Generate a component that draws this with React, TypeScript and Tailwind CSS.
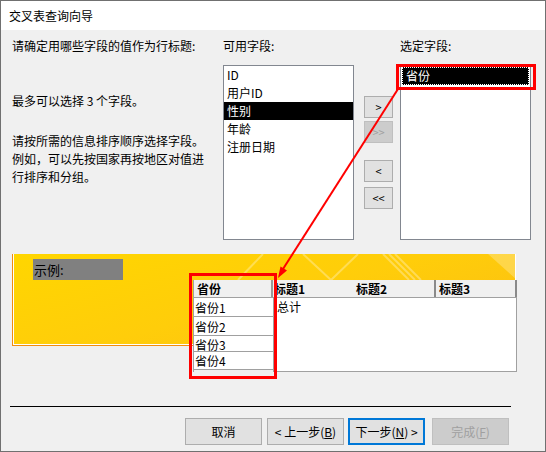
import React from "react";

const available = ["ID", "用户ID", "性别", "年龄", "注册日期"];

const Btn = ({ label, disabled }: { label: string; disabled?: boolean }) => (
  <button
    className={
      "w-[29px] h-[22px] border text-[11px] leading-none flex items-center justify-center " +
      (disabled
        ? "bg-[#cccccc] border-[#bfbfbf] text-[#a0a0a0]"
        : "bg-[#e1e1e1] border-[#adadad] text-black")
    }
  >
    {label}
  </button>
);

const FooterBtn = ({
  children,
  variant,
  className,
}: {
  children: React.ReactNode;
  variant?: "focus" | "disabled";
  className?: string;
}) => (
  <button
    className={
      "h-[27px] w-[77px] flex items-center justify-center text-[12px] whitespace-pre " +
      (variant === "focus"
        ? "border-2 border-[#0078d7] bg-[#e1e1e1] text-black "
        : variant === "disabled"
        ? "border border-[#bfbfbf] bg-[#cccccc] text-[#a0a0a0] "
        : "border border-[#adadad] bg-[#e1e1e1] text-black ") +
      (className || "")
    }
  >
    {children}
  </button>
);

export default function App() {
  return (
    <div className="relative w-[546px] h-[452px] bg-[#f0f0f0] border border-[#707070] flex flex-col overflow-hidden text-[12px] text-black font-['Microsoft_YaHei','Noto_Sans_CJK_SC',sans-serif]">
      {/* Title bar */}
      <div className="h-[29px] bg-white flex items-center pl-[8px] leading-none">
        交叉表查询向导
      </div>

      {/* Field picking */}
      <div className="flex pl-[11px] pt-[8px] h-[210px]">
        <div className="w-[211px]">
          <p className="leading-[16px]">请确定用哪些字段的值作为行标题:</p>
          <p className="leading-[16px] mt-[39px]">最多可以选择 3 个字段。</p>
          <p className="leading-[18px] mt-[23px] whitespace-nowrap">
            请按所需的信息排序顺序选择字段。
            <br />
            例如，可以先按国家再按地区对值进
            <br />
            行排序和分组。
          </p>
        </div>

        <div className="w-[131px]">
          <p className="leading-[16px]">可用字段:</p>
          <div className="mt-[11px] h-[175px] border border-[#828790] bg-white">
            {available.map((f) => (
              <div
                key={f}
                className={
                  "h-[18px] leading-[18px] pl-[3px] " +
                  (f === "性别" ? "bg-black text-white" : "")
                }
              >
                {f}
              </div>
            ))}
          </div>
        </div>

        <div className="w-[46px] pl-[10px] flex flex-col">
          <div className="mt-[58px]">
            <Btn label=">" />
          </div>
          <div className="mt-[3px]">
            <Btn label=">>" disabled />
          </div>
          <div className="mt-[17px]">
            <Btn label="<" />
          </div>
          <div className="mt-[5px]">
            <Btn label="<<" />
          </div>
        </div>

        <div className="w-[131px]">
          <p className="leading-[16px]">选定字段:</p>
          <div className="mt-[11px] h-[175px] border border-[#828790] bg-white p-px">
            <div className="h-[18px] leading-[16px] pl-[3px] bg-black text-white border border-dotted border-white">
              省份
            </div>
          </div>
        </div>
      </div>

      {/* Sample preview */}
      <div className="pl-[11px] mt-[14px]">
        <div className="relative w-[504px] h-[92px]">
          <div className="relative w-full h-full overflow-hidden border-l border-b border-r border-l-[#f28c0f] border-b-[#f28c0f] border-r-white shadow-[inset_1px_-1px_0_#ffffff] bg-[linear-gradient(165deg,#ffd600_0%,#ffcd0a_50%,#fbbd14_100%)]">
            <svg className="absolute inset-0" width="504" height="92">
              <g stroke="#ffffff" strokeWidth="2" opacity="0.3">
                <line x1="290" y1="0" x2="318" y2="26" />
                <line x1="318" y1="26" x2="345" y2="0" />
                <line x1="225" y1="26" x2="250" y2="0" />
                <line x1="370" y1="0" x2="396" y2="26" />
                <line x1="376" y1="0" x2="402" y2="26" />
                <line x1="382" y1="0" x2="408" y2="26" />
              </g>
              <polygon points="475,0 504,0 504,26" fill="#ffffff" opacity="0.25" />
            </svg>
            <div className="absolute left-[20px] top-[5px] w-[90px] h-[21px] bg-[#808080] text-[13px] leading-[21px] pl-px">
              示例:
            </div>
          </div>

          {/* Sample table */}
          <div className="absolute left-[181px] top-[26px] w-[324px]">
            <div className="flex h-[18px] bg-[#f0f0f0] border-b border-[#a0a0a0] font-bold leading-[18px]">
              <div className="w-[80px] pl-[3px] border-l border-[#a0a0a0] border-r-2 border-r-[#9a9a9a]">省份</div>
              <div className="w-[82px] pl-[1px]">标题1</div>
              <div className="w-[81px] pl-[1px] border-r-2 border-r-[#8a8a8a]">标题2</div>
              <div className="w-[81px] pl-[3px] border-r-2 border-r-[#8a8a8a]">标题3</div>
            </div>
            <div className="flex">
              <div className="w-[80px] border-l border-[#a0a0a0]">
                <div className="h-[19px] leading-[19px] bg-white border-b border-[#a0a0a0] pl-[1px]">省份1</div>
                <div className="h-[19px] leading-[19px] bg-white border-b border-[#a0a0a0] pl-[1px]">省份2</div>
                <div className="h-[16px] leading-[18px] bg-white border-b border-[#a0a0a0] pl-[1px] overflow-hidden">省份3</div>
                <div className="h-[18px] leading-[17px] bg-white border-b border-[#a0a0a0] pl-[1px]">省份4</div>
              </div>
              <div className="w-[244px] h-[74px] bg-white border-l border-r border-b border-[#a0a0a0] pl-[3px] leading-[18px]">
                总计
              </div>
            </div>
          </div>
        </div>
      </div>

      {/* Separator */}
      <div className="mt-[60px] ml-[9px] w-[501px] h-px bg-black" />

      {/* Footer buttons */}
      <div className="flex mt-[11px] ml-[184px]">
        <FooterBtn className="w-[76px]">取消</FooterBtn>
        <FooterBtn className="ml-[5px] w-[76px]">
          {"< 上一步("}<span className="underline">B</span>)
        </FooterBtn>
        <FooterBtn variant="focus" className="ml-[4px]">
          下一步(<span className="underline">N</span>{") >"}
        </FooterBtn>
        <FooterBtn variant="disabled" className="ml-[7px] w-[76px]">
          完成(<span className="underline">F</span>)
        </FooterBtn>
      </div>

      {/* Red annotations */}
      <svg className="absolute left-0 top-0 pointer-events-none" width="546" height="452">
        <rect x="396.5" y="64.5" width="137" height="23" fill="none" stroke="#ff0000" strokeWidth="3" />
        <rect x="189.5" y="273.5" width="85" height="103" fill="none" stroke="#ff0000" strokeWidth="3" />
        <line x1="397" y1="88" x2="282" y2="268" stroke="#ff0000" strokeWidth="2" />
        <polygon points="277,277 279.5,265.5 286,269.5" fill="#ff0000" />
      </svg>
    </div>
  );
}
